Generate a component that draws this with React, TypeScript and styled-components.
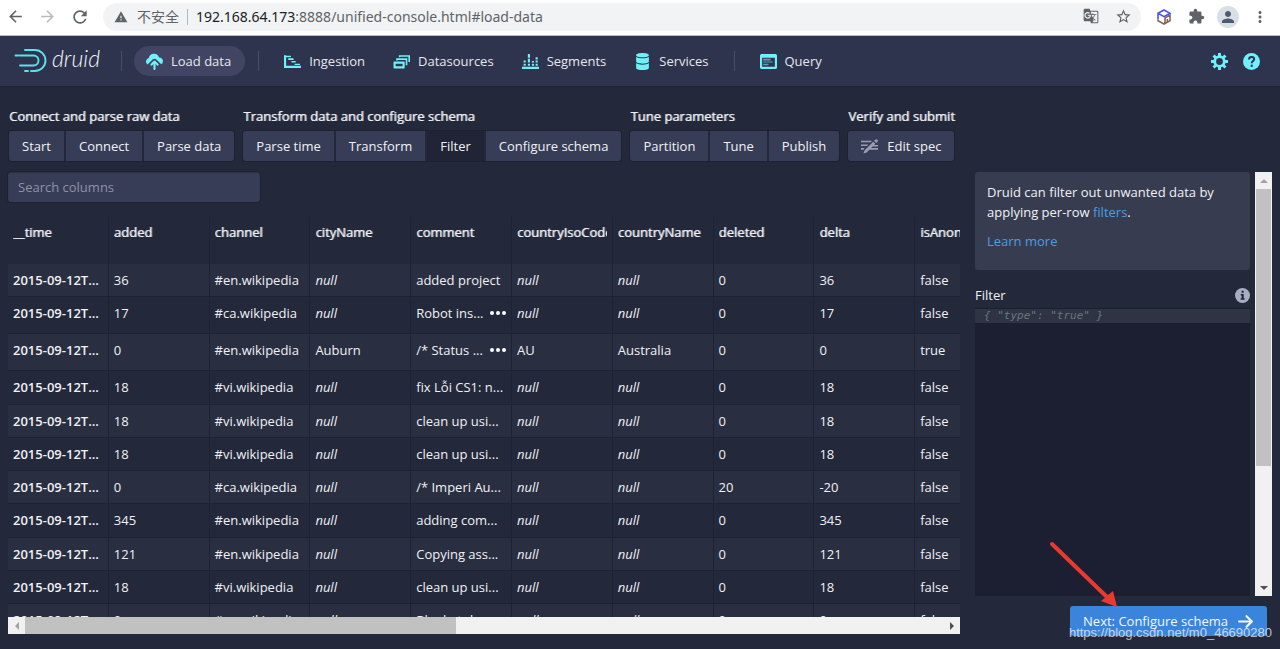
import React from "react";
import styled, { createGlobalStyle, css } from "styled-components";
import {
  MdArrowBack,
  MdArrowForward,
  MdExtension,
  MdGTranslate,
  MdMoreVert,
  MdPerson,
  MdRefresh,
  MdStarBorder,
  MdWarning,
} from "react-icons/md";

const GlobalStyle = createGlobalStyle`
  *, *::before, *::after { box-sizing: border-box; }
  body {
    margin: 0;
    background: #24283b;
    color: #f0f1f5;
    font-family: "Open Sans", "Noto Sans CJK SC", sans-serif;
    font-size: 13px;
    line-height: 20px;
  }
  button, input { font: inherit; color: inherit; }
  button { margin: 0; border: 0; padding: 0; background: none; cursor: pointer; }
  svg { display: block; flex: none; }
`;

/* Headings thicken the regular weight instead of using a wider bold face. */
const headingWeight = css`
  font-size: 13px;
  font-weight: 400;
  text-shadow: 1px 0 0 rgba(240, 241, 245, 0.6);
`;

const Page = styled.div`
  position: relative;
  display: flex;
  flex-direction: column;
  height: 100vh;
  overflow: hidden;
`;

/* ---------- browser bar ---------- */

const BrowserBar = styled.div`
  display: flex;
  align-items: center;
  gap: 13px;
  height: 36px;
  flex: none;
  padding: 0 4px 2px 6px;
  background: #fff;
  border-bottom: 1px solid #b9bcc4;
  color: #5f6368;
`;

const BrowserButton = styled.button<{ $dim?: boolean }>`
  display: flex;
  color: ${(p) => (p.$dim ? "#b9bbbe" : "#5f6368")};
`;

const AddressBar = styled.div`
  display: flex;
  align-items: center;
  flex: 1;
  height: 28px;
  padding: 0 9px 0 11px;
  border-radius: 14px;
  background: #f1f3f4;
  font-size: 14px;
`;

const Insecure = styled.span`
  margin-left: 9px;
  padding-right: 8px;
  border-right: 1px solid #b4b7bb;
  line-height: 16px;
`;

const Address = styled.span`
  flex: 1;
  margin-left: 8px;
  font-family: "Noto Sans", sans-serif;
  white-space: nowrap;
  b {
    font-weight: 400;
    color: #202124;
  }
`;

const AddressTools = styled.div`
  display: flex;
  gap: 16px;
`;

const BrowserTools = styled.div`
  display: grid;
  grid-template-columns: repeat(4, 32px);
  justify-items: center;
  align-items: center;
  margin-left: -6px;
`;

const Avatar = styled.button`
  display: flex;
  align-items: center;
  justify-content: center;
  width: 22px;
  height: 22px;
  border-radius: 50%;
  background: #dadfe6;
  color: #4d5b70;
`;

/* ---------- top navigation ---------- */

const Header = styled.header`
  display: flex;
  align-items: center;
  height: 51px;
  flex: none;
  padding: 0 20px 0 14px;
  background: #2f344e;
  border-bottom: 1px solid #1f2233;
  color: #e6e7ee;
`;

const Logo = styled.a`
  display: flex;
  width: 97px;
`;

const Divider = styled.span`
  width: 1px;
  height: 20px;
  margin: 0 10px;
  background: #484d67;
`;

const Nav = styled.nav`
  display: flex;
  align-items: center;
  gap: 3px;
  flex: 1;
  padding-left: 2px;
`;

const NavGroup = styled.div`
  display: flex;
  gap: 4px;
`;

const NavItem = styled.a<{ $active?: boolean }>`
  display: flex;
  align-items: center;
  gap: 8px;
  height: 30px;
  padding: 0 12px;
  border-radius: 15px;
  background: ${(p) => (p.$active ? "#414563" : "transparent")};
  color: inherit;
  text-decoration: none;
  svg {
    color: #6ff0fb;
  }
  ${(p) => p.$active && "padding-right: 14px;"}
`;

const HeaderTools = styled.div`
  display: flex;
  gap: 15px;
  color: #6ff0fb;
`;

/* ---------- wizard steps ---------- */

const Steps = styled.div`
  display: flex;
  gap: 9px;
  flex: none;
  padding: 19px 9px 0;
`;

const StepGroup = styled.section`
  display: flex;
  flex-direction: column;
  align-items: flex-start;
  gap: 5px;
`;

const StepTitle = styled.h2`
  margin: 0;
  ${headingWeight}
  line-height: 20px;
  white-space: nowrap;
`;

const StepButtons = styled.div`
  display: flex;
  gap: 2px;
  border-radius: 3px;
  overflow: hidden;
  box-shadow: 0 0 0 1px #1e2132;
`;

const StepButton = styled.button<{ $active?: boolean }>`
  display: flex;
  align-items: center;
  gap: 9px;
  height: 30px;
  padding: 0 13px;
  background: ${(p) => (p.$active ? "#212436" : "#383d57")};
  white-space: nowrap;
  svg {
    color: #9a9eb5;
  }
`;

/* ---------- main area ---------- */

const Main = styled.main`
  display: grid;
  grid-template-columns: minmax(0, 1fr) 297px;
  gap: 15px;
  flex: 1;
  min-height: 0;
  padding: 11px 8px 13px;
`;

const TablePane = styled.section`
  display: flex;
  flex-direction: column;
  min-height: 0;
  padding-bottom: 2px;
`;

const Search = styled.input`
  width: 252px;
  height: 30px;
  flex: none;
  padding: 0 10px;
  border: 0;
  border-radius: 3px;
  background: #383d57;
  box-shadow: 0 0 0 1px #1e2132, inset 0 1px 1px rgba(16, 22, 26, 0.3);
  outline: none;
  &::placeholder {
    color: #8e91a8;
    opacity: 1;
  }
`;

const TableView = styled.div`
  flex: 1;
  min-height: 0;
  margin-top: 15px;
  overflow: hidden;
`;

const DataTable = styled.table`
  width: calc(100% + 56px);
  table-layout: fixed;
  border-collapse: separate;
  border-spacing: 0;
  th,
  td {
    padding: 6px 5px;
    border-right: 1px solid #1f2234;
    overflow: hidden;
    text-align: left;
    vertical-align: top;
    white-space: nowrap;
  }
  thead th {
    height: 47px;
    padding-top: 5px;
    ${headingWeight}
  }
`;

const HeadText = styled.span`
  display: block;
  overflow: hidden;
`;

const Row = styled.tr<{ $tall?: boolean }>`
  height: ${(p) => (p.$tall ? 37 : 33)}px;
  &:nth-child(odd) {
    background: #2a2e41;
  }
  &:nth-child(4n) {
    height: 34px;
  }
  th,
  td {
    border-bottom: 1px solid #1f2234;
  }
  th {
    font-weight: 600;
  }
`;

const CellText = styled.span`
  display: flex;
  justify-content: space-between;
  align-items: center;
`;

const More = styled.button`
  display: flex;
  gap: 2px;
  i {
    width: 4px;
    height: 4px;
    border-radius: 50%;
    background: #fff;
  }
`;

const HScroll = styled.div`
  display: flex;
  flex: none;
  height: 17px;
  background: #f1f1f1;
`;

const VScroll = styled.div`
  display: flex;
  flex-direction: column;
  width: 17px;
  background: #f1f1f1;
`;

const Track = styled.div`
  flex: 1;
  min-height: 0;
`;

const HThumb = styled.div`
  width: 47%;
  height: 100%;
  background: #c1c1c1;
`;

const VThumb = styled.div`
  height: 71%;
  margin: 0 1px;
  background: #c1c1c1;
`;

const ScrollArrow = styled.button<{ $dim?: boolean }>`
  display: flex;
  align-items: center;
  justify-content: center;
  flex: none;
  width: 17px;
  height: 17px;
  color: ${(p) => (p.$dim ? "#a3a3a3" : "#505050")};
`;

/* ---------- right panel ---------- */

const Side = styled.aside`
  display: flex;
  flex-direction: column;
  gap: 10px;
  min-height: 0;
`;

const SideBody = styled.div`
  display: flex;
  gap: 5px;
  flex: 1;
  min-height: 0;
`;

const SideContent = styled.div`
  display: flex;
  flex-direction: column;
  flex: 1;
`;

const Callout = styled.div`
  height: 98px;
  flex: none;
  padding: 10px 12px;
  border-radius: 3px;
  background: #383c50;
  p {
    margin: 0 0 9px;
  }
`;

const Link = styled.a`
  color: #489fe0;
  text-decoration: none;
`;

const FieldHead = styled.div`
  display: flex;
  align-items: center;
  justify-content: space-between;
  height: 20px;
  margin: 15px 0 3px;
`;

const Editor = styled.div`
  flex: 1;
  padding-top: 1px;
  background: #1c1f31;
`;

const EditorLine = styled.input`
  display: block;
  width: 100%;
  height: 14px;
  padding: 0 9px;
  border: 0;
  outline: none;
  background: #2f3344;
  font: italic 11px/14px "DejaVu Sans Mono", monospace;
  &::placeholder {
    color: #647a80;
    opacity: 1;
  }
`;

const NextButton = styled.button`
  display: flex;
  align-items: center;
  align-self: flex-end;
  gap: 9px;
  height: 30px;
  margin-right: 5px;
  padding: 0 13px;
  border-radius: 3px;
  background: #3a84dc;
  color: #f5f8fc;
`;

/* ---------- overlays ---------- */

const Pointer = styled.svg`
  position: absolute;
  right: 160px;
  bottom: 40px;
  pointer-events: none;
`;

const Credit = styled.span`
  position: absolute;
  right: 8px;
  bottom: 6px;
  font: 13px/20px "Liberation Sans", sans-serif;
  color: rgba(255, 255, 255, 0.7);
  pointer-events: none;
`;

/* ---------- icons ---------- */

const Icon = ({ size = 17, children }: { size?: number; children: React.ReactNode }) => (
  <svg width={size} height={size} viewBox="0 0 16 16" fill="currentColor" aria-hidden="true">
    {children}
  </svg>
);

const UploadIcon = () => (
  <Icon>
    <path d="M12.300 4.200A5 5 0 0 0 2.600 4.600 3.600 3.600 0 0 0 0 8c0 1.200.6 2.200 1.500 2.800L6.200 6.200a2.600 2.600 0 0 1 3.600 0l4.500 4.500A3.400 3.400 0 0 0 16 7.800c0-2-1.600-3.600-3.700-3.600z" />
    <path d="M8.700 7.300a1 1 0 0 0-1.400 0l-3 3a1 1 0 0 0 1.400 1.400L7 10.400V15a1 1 0 0 0 2 0v-4.600l1.300 1.300a1 1 0 0 0 1.400-1.400z" />
  </Icon>
);

const GanttIcon = () => (
  <Icon>
    <path d="M0 2h2v10h14v2H0zM2 2.500h4.500V4H2zM4 5h5v1.500H4zM7 7.500h4V9H7zM10 10h5v1.300h-5z" />
  </Icon>
);

const StackIcon = () => (
  <Icon>
    <path
      fillRule="evenodd"
      d="M1 8h9.500l.5.500V14l-.5.500H1L.5 14V8.500zM2.500 10v2.500H9V10z"
    />
    <path d="M3 5h10.500v6.500H12V6.500H4.500V7H3zM5.500 2H16v6.500h-1.500v-5H7V4H5.500z" />
  </Icon>
);

const ChartIcon = () => (
  <Icon>
    <path d="M0 13h16v2H0zM1.500 10h2v2h-2zM1.500 7h2v2h-2zM5.500 10h2v2h-2zM5.500 5.500h2V9h-2zM5.500 1h2v3.500h-2zM9.300 10h2v2h-2zM9.300 7.500h2V9h-2zM12.800 10h2v2h-2zM12.800 7h2v2h-2zM12.800 4h2v2h-2z" />
  </Icon>
);

const DatabaseIcon = () => (
  <Icon>
    <path d="M8 4c3.310 0 6-.9 6-2s-2.690-2-6-2C4.680 0 2 .9 2 2s2.680 2 6 2zm-6-.52V8c0 1.100 2.690 2 6 2s6-.9 6-2V3.480C12.780 4.400 10.590 5 8 5s-4.780-.6-6-1.520zm0 6V14c0 1.100 2.690 2 6 2s6-.9 6-2V9.480C12.780 10.400 10.590 11 8 11s-4.780-.6-6-1.520z" />
  </Icon>
);

const QueryIcon = () => (
  <Icon>
    <path fillRule="evenodd" d="M1 1h14l1 1v12l-1 1H1l-1-1V2zM2 4.500V13h12V4.500z" />
    <path opacity=".6" d="M3 5.500h7V7H3zM3 8h9v1H3zM3 10h5v1.500H3z" />
  </Icon>
);

const CogIcon = () => (
  <Icon>
    <g stroke="currentColor" strokeWidth="2.800">
      <path d="M8 0v4M8 12v4M0 8h4M12 8h4M2.400 2.400l2.800 2.800M10.800 10.800l2.800 2.800M2.400 13.600l2.800-2.800M10.800 5.200l2.800-2.800" />
    </g>
    <circle cx="8" cy="8" r="4.500" fill="none" stroke="currentColor" strokeWidth="2.600" />
  </Icon>
);

const HelpIcon = () => (
  <Icon>
    <circle cx="8" cy="8" r="8" />
    <path
      d="M5.700 6C5.700 4.400 6.700 3.700 8.100 3.700s2.400.8 2.400 2c0 1.900-2.300 1.800-2.300 3.900"
      fill="none"
      stroke="#2f344e"
      strokeWidth="1.900"
    />
    <path d="M7.200 11h2v2h-2z" fill="#2f344e" />
  </Icon>
);

const EditIcon = () => (
  <Icon>
    <path d="M0 2.500h10.500L9 4H0zM0 6h7L5.500 7.500H0zM0 9.500h3.500L2.300 11H0zM12 6.500h4V8h-5.500zM9 9.500h7V11H7.500zM11.500 3.500l2 2-8.200 8.200-3 1 1-3zM12.300 2.600l1.400-1.300h1.500l.6.700v1.400l-1.400 1.200z" />
  </Icon>
);

const InfoIcon = () => (
  <Icon size={15}>
    <circle cx="8" cy="8" r="8" fill="#a9adc4" />
    <path d="M7 3h2.300v2H7zM6 6.500h3.300V11h1v1.500H6V11h1V8H6z" fill="#24283b" />
  </Icon>
);

const ArrowRightIcon = () => (
  <Icon>
    <path d="M14.700 7.290l-5-5a.965.965 0 00-.710-.300 1.003 1.003 0 00-.710 1.710l3.290 3.290H1.990c-.550 0-1 .450-1 1s.450 1 1 1h9.590l-3.290 3.290a1.003 1.003 0 001.420 1.420l5-5c.180-.180.290-.430.290-.710s-.120-.520-.300-.700z" />
  </Icon>
);

const CubeIcon = () => (
  <svg width="14" height="16" viewBox="0 0 14 16" fill="none" strokeWidth="1.600" aria-hidden="true">
    <path d="M1 10.500V4.300L7 1l6 3.300L7 7.600 1 4.300" stroke="#4a55f0" />
    <path d="M1 10.500v1.200L7 15l6-3.300V6L8 8.800V14M10.300 10v2.500" stroke="#84675f" />
  </svg>
);

const Triangle = ({ turn }: { turn: number }) => (
  <svg width="8" height="8" viewBox="0 0 8 8" fill="currentColor" aria-hidden="true">
    <path d="M0 6l4-4 4 4z" transform={`rotate(${turn} 4 4)`} />
  </svg>
);

const DruidMark = () => (
  <svg width="92" height="28" viewBox="0 0 92 28" aria-hidden="true">
    <g fill="none" stroke="#5fdfec" strokeWidth="1.900" strokeLinecap="round">
      <path d="M11 3h10a10.500 10.500 0 0 1 0 21h-4M14 24h-3" />
      <path d="M6 8.500h13.500a5 5 0 0 1 0 10H6M1.500 8.500h3" />
    </g>
    <text x="38" y="20" fontFamily="Lato" fontSize="23" fontStyle="italic" fontWeight="300" fill="#f3f4f8">
      druid
    </text>
  </svg>
);

/* ---------- data ---------- */

const columns = [
  "__time", "added", "channel", "cityName", "comment",
  "countryIsoCode", "countryName", "deleted", "delta", "isAnonymous",
];

type Sample = { cells: (string | null)[]; more?: boolean };

const T = "2015-09-12T...";
const rows: Sample[] = [
  { cells: [T, "36", "#en.wikipedia", null, "added project", null, null, "0", "36", "false"] },
  { cells: [T, "17", "#ca.wikipedia", null, "Robot ins...", null, null, "0", "17", "false"], more: true },
  { cells: [T, "0", "#en.wikipedia", "Auburn", "/* Status ...", "AU", "Australia", "0", "0", "true"], more: true },
  { cells: [T, "18", "#vi.wikipedia", null, "fix Lỗi CS1: n...", null, null, "0", "18", "false"] },
  { cells: [T, "18", "#vi.wikipedia", null, "clean up usi...", null, null, "0", "18", "false"] },
  { cells: [T, "18", "#vi.wikipedia", null, "clean up usi...", null, null, "0", "18", "false"] },
  { cells: [T, "0", "#ca.wikipedia", null, "/* Imperi Au...", null, null, "20", "-20", "false"] },
  { cells: [T, "345", "#en.wikipedia", null, "adding com...", null, null, "0", "345", "false"] },
  { cells: [T, "121", "#en.wikipedia", null, "Copying ass...", null, null, "0", "121", "false"] },
  { cells: [T, "18", "#vi.wikipedia", null, "clean up usi...", null, null, "0", "18", "false"] },
  { cells: [T, "0", "#en.wikipedia", null, "Blanket do...", null, null, "0", "0", "false"] },
];

const stepGroups = [
  { title: "Connect and parse raw data", steps: ["Start", "Connect", "Parse data"] },
  { title: "Transform data and configure schema", steps: ["Parse time", "Transform", "Filter", "Configure schema"] },
  { title: "Tune parameters", steps: ["Partition", "Tune", "Publish"] },
  { title: "Verify and submit", steps: ["Edit spec"] },
];

const views = [
  { label: "Ingestion", icon: <GanttIcon /> },
  { label: "Datasources", icon: <StackIcon /> },
  { label: "Segments", icon: <ChartIcon /> },
  { label: "Services", icon: <DatabaseIcon /> },
];

export default function App() {
  return (
    <Page>
      <GlobalStyle />
      <BrowserBar>
        <BrowserButton aria-label="Back"><MdArrowBack size={19} /></BrowserButton>
        <BrowserButton aria-label="Forward" $dim><MdArrowForward size={19} /></BrowserButton>
        <BrowserButton aria-label="Reload"><MdRefresh size={20} /></BrowserButton>
        <AddressBar>
          <MdWarning size={14} />
          <Insecure>不安全</Insecure>
          <Address><b>192.168.64.173</b>:8888/unified-console.html#load-data</Address>
          <AddressTools>
            <BrowserButton aria-label="Translate"><MdGTranslate size={16} /></BrowserButton>
            <BrowserButton aria-label="Bookmark"><MdStarBorder size={17} /></BrowserButton>
          </AddressTools>
        </AddressBar>
        <BrowserTools>
          <BrowserButton aria-label="Extension"><CubeIcon /></BrowserButton>
          <BrowserButton aria-label="Extensions"><MdExtension size={17} /></BrowserButton>
          <Avatar aria-label="Profile"><MdPerson size={18} /></Avatar>
          <BrowserButton aria-label="Menu"><MdMoreVert size={18} /></BrowserButton>
        </BrowserTools>
      </BrowserBar>

      <Header>
        <Logo href="#" aria-label="druid"><DruidMark /></Logo>
        <Divider />
        <Nav>
          <NavItem href="#load-data" $active><UploadIcon />Load data</NavItem>
          <Divider />
          <NavGroup>
            {views.map((v) => (
              <NavItem key={v.label} href={`#${v.label.toLowerCase()}`}>{v.icon}{v.label}</NavItem>
            ))}
          </NavGroup>
          <Divider />
          <NavItem href="#query"><QueryIcon />Query</NavItem>
        </Nav>
        <HeaderTools>
          <button aria-label="Settings"><CogIcon /></button>
          <button aria-label="Help"><HelpIcon /></button>
        </HeaderTools>
      </Header>

      <Steps>
        {stepGroups.map((group) => (
          <StepGroup key={group.title}>
            <StepTitle>{group.title}</StepTitle>
            <StepButtons>
              {group.steps.map((step) => (
                <StepButton key={step} $active={step === "Filter"}>
                  {step === "Edit spec" && <EditIcon />}
                  {step}
                </StepButton>
              ))}
            </StepButtons>
          </StepGroup>
        ))}
      </Steps>

      <Main>
        <TablePane>
          <Search type="text" placeholder="Search columns" aria-label="Search columns" />
          <TableView>
            <DataTable>
              <thead>
                <tr>{columns.map((c) => <th key={c} scope="col"><HeadText>{c}</HeadText></th>)}</tr>
              </thead>
              <tbody>
                {rows.map((row, r) => (
                  <Row key={r} $tall={row.more}>
                    {row.cells.map((cell, c) =>
                      c === 0 ? (
                        <th key={c} scope="row">{cell}</th>
                      ) : (
                        <td key={c}>
                          {cell === null ? (
                            <em>null</em>
                          ) : c === 4 && row.more ? (
                            <CellText>
                              {cell}
                              <More aria-label="Show full value"><i /><i /><i /></More>
                            </CellText>
                          ) : (
                            cell
                          )}
                        </td>
                      )
                    )}
                  </Row>
                ))}
              </tbody>
            </DataTable>
          </TableView>
          <HScroll>
            <ScrollArrow $dim aria-label="Scroll left"><Triangle turn={-90} /></ScrollArrow>
            <Track><HThumb /></Track>
            <ScrollArrow aria-label="Scroll right"><Triangle turn={90} /></ScrollArrow>
          </HScroll>
        </TablePane>

        <Side>
          <SideBody>
            <SideContent>
              <Callout>
                <p>
                  Druid can filter out unwanted data by applying per-row <Link href="#filters">filters</Link>.
                </p>
                <p><Link href="#docs">Learn more</Link></p>
              </Callout>
              <FieldHead>
                <label htmlFor="filter">Filter</label>
                <button aria-label="Filter info"><InfoIcon /></button>
              </FieldHead>
              <Editor>
                <EditorLine id="filter" type="text" placeholder={'{ "type": "true" }'} />
              </Editor>
            </SideContent>
            <VScroll>
              <ScrollArrow $dim aria-label="Scroll up"><Triangle turn={0} /></ScrollArrow>
              <Track><VThumb /></Track>
              <ScrollArrow aria-label="Scroll down"><Triangle turn={180} /></ScrollArrow>
            </VScroll>
          </SideBody>
          <NextButton>Next: Configure schema<ArrowRightIcon /></NextButton>
        </Side>
      </Main>

      <Pointer width="72" height="70" viewBox="0 0 72 70" aria-hidden="true">
        <path d="M4 5L60 59" stroke="#e83a2e" strokeWidth="4" strokeLinecap="round" />
        <path d="M69 68L53 62L58 58L60 56L65 52Z" fill="#e83a2e" />
      </Pointer>
      <Credit>https://blog.csdn.net/m0_46690280</Credit>
    </Page>
  );
}
